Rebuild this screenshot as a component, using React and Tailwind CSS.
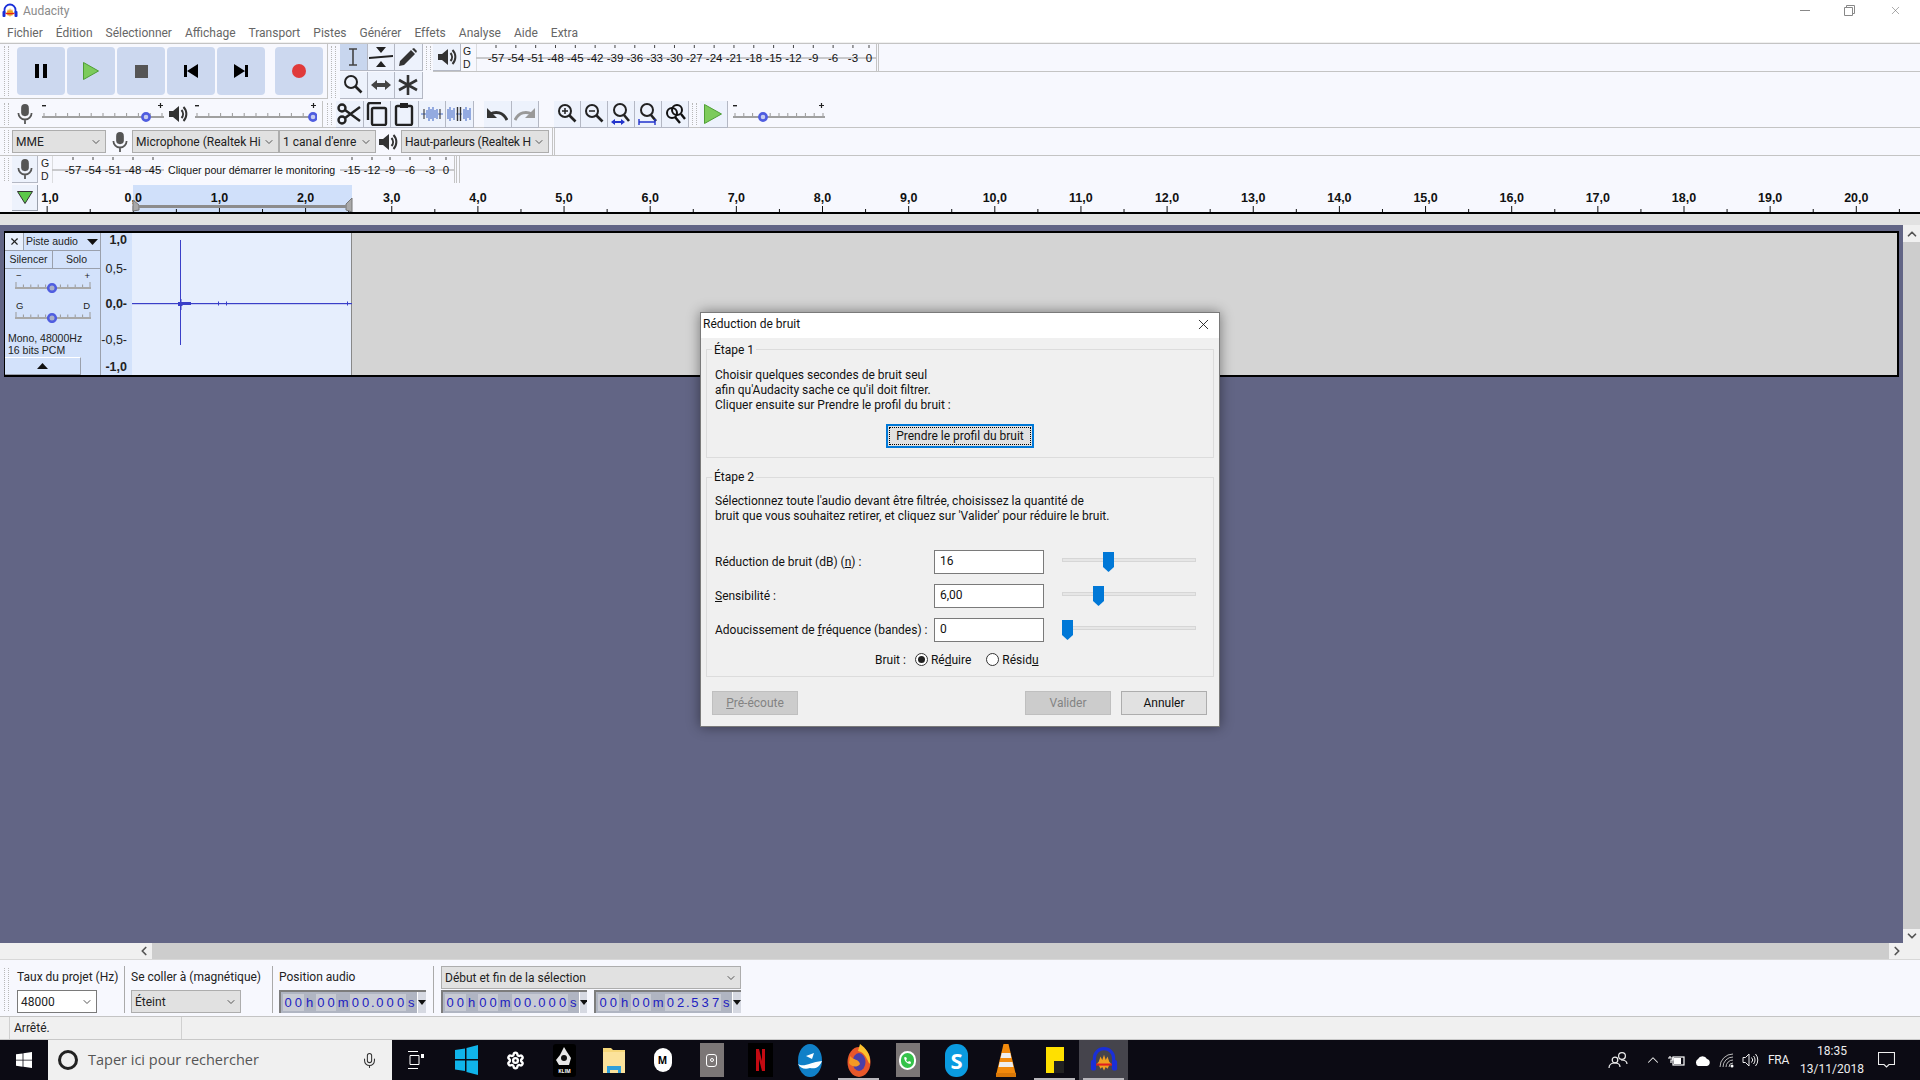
import { Fragment } from "react";
import { ChevronDown, ChevronLeft, ChevronRight, ChevronUp, Mic, Settings, X } from "lucide-react";

const menus = ["Fichier", "Édition", "Sélectionner", "Affichage", "Transport", "Pistes", "Générer", "Effets", "Analyse", "Aide", "Extra"];
const meterTop = ["-57", "-54", "-51", "-48", "-45", "-42", "-39", "-36", "-33", "-30", "-27", "-24", "-21", "-18", "-15", "-12", "-9", "-6", "-3", "0"];
const rulerMarks = Array.from({ length: 21 }, (_, i) => i);

function Grip({ className = "" }) {
  return (
    <div className={`w-[5px] shrink-0 self-stretch my-[2px] border-x border-dotted border-[#b8b8b8] ${className}`} />
  );
}

function ToolBtn({ children, active, narrow }) {
  return (
    <div
      className={`h-[27px] shrink-0 flex items-center justify-center border-r border-b border-[#b4b8c4] ${
        narrow ? "w-[27px]" : "w-[27.5px]"
      } ${active ? "bg-[#c8d6ee]" : "bg-[#edf2fc]"}`}
    >
      {children}
    </div>
  );
}

function Speaker({ size = 20, color = "#333" }) {
  return (
    <svg width={size} height={size} viewBox="0 0 20 20">
      <path d="M1 7h4l6-5v16l-6-5H1z" fill={color} />
      <path d="M13.5 6a6 6 0 0 1 0 8M15.5 3a10 10 0 0 1 0 14" stroke={color} strokeWidth="2" fill="none" />
    </svg>
  );
}

function MicIcon({ size = 20 }) {
  return (
    <svg width={size} height={size} viewBox="0 0 20 20">
      <rect x="6.5" y="1" width="7" height="11" rx="3.5" fill="#555" />
      <path d="M4 9a6 6 0 0 0 12 0M10 15v4" stroke="#555" strokeWidth="1.6" fill="none" />
    </svg>
  );
}

function Combo({ label, className = "", white }) {
  return (
    <div
      className={`flex items-center justify-between h-[23px] pl-[3px] pr-[3px] border shrink-0 overflow-hidden text-[12px] text-[#222] ${
        white ? "bg-white border-[#7a7a7a]" : "bg-[#e1e1e1] border-[#adadad]"
      } ${className}`}
    >
      <span className="whitespace-nowrap">{label}</span>
      <ChevronDown size={12} className="shrink-0 text-[#555]" />
    </div>
  );
}

function HSlider({ width, thumb }) {
  const ticks = Array.from({ length: 11 }, (_, i) => 2 + (i * (width - 4)) / 10);
  return (
    <svg width={width} height="24" viewBox={`0 0 ${width} 24`} className="shrink-0">
      <rect x="0" y="3" width="4" height="1.4" fill="#222" />
      <path d={`M${width - 6} 3.5h5M${width - 3.5} 1v5`} stroke="#222" strokeWidth="1.2" />
      {ticks.map((t) => (
        <line key={t} x1={t} x2={t} y1="11" y2="14" stroke="#999" />
      ))}
      <rect x="0" y="14" width={width} height="2" fill="#a0a0a0" />
      <circle cx={thumb} cy="15" r="3.6" fill="#c6ccee" stroke="#4f5de0" strokeWidth="2.6" />
    </svg>
  );
}

function Meter({ width, labels, message }) {
  return (
    <svg width={width} height="27" viewBox={`0 0 ${width} 27`} className="shrink-0">
      <line x1="0" x2={width} y1="14" y2="14" stroke="#9a9a9a" />
      <line x1="0" x2="0" y1="0" y2="27" stroke="#c0c0c0" />
      {labels.map((l) => (
        <Fragment key={l.t}>
          <line x1={l.x} x2={l.x} y1="1" y2="4" stroke="#444" />
          <text x={l.x} y="18" textAnchor="middle" fontFamily="'Liberation Sans', sans-serif" fontSize="11.5" fill="#111">
            {l.t}
          </text>
        </Fragment>
      ))}
      {message && (
        <>
          <rect x="112" y="6" width="176" height="17" fill="#f9fafe" />
          <text x="116" y="18" fontFamily="'Liberation Sans', sans-serif" fontSize="10.6" fill="#111">
            {message}
          </text>
        </>
      )}
    </svg>
  );
}

function GD() {
  return (
    <div className="w-[11px] shrink-0 flex flex-col justify-between py-[1px] font-['Liberation_Sans',sans-serif] text-[10.5px] leading-[13px] text-[#222]">
      <span>G</span>
      <span>D</span>
    </div>
  );
}

function TransportBtn({ children, className = "" }) {
  return (
    <div className={`w-[48px] h-[48px] rounded-[4px] bg-[#ccd8ef] flex items-center justify-center ${className}`}>{children}</div>
  );
}

function Row({ children, className = "" }) {
  return (
    <div className={`h-[28px] shrink-0 flex items-center bg-[#f7f8fe] border-b border-[#c4c4c4] ${className}`}>{children}</div>
  );
}

function MagGlass({ children }) {
  return (
    <svg width="24" height="24" viewBox="0 0 24 24">
      <circle cx="10" cy="9" r="6" fill="none" stroke="#222" strokeWidth="2" />
      <path d="M14.5 13.5l6 6" stroke="#222" strokeWidth="2.6" />
      {children}
    </svg>
  );
}

function Ruler() {
  const ticks = [];
  for (let i = -2; i <= 41; i++) ticks.push(i);
  const origin = 133.3;
  return (
    <svg width="1908" height="29" viewBox="0 0 1908 29" className="absolute left-0 top-0">
      {ticks.map((i) => {
        const x = origin + i * 43.075;
        return <line key={i} x1={x} x2={x} y1={i % 2 === 0 ? 23 : 26} y2="29" stroke="#111" />;
      })}
      {rulerMarks.map((m) => (
        <text
          key={m}
          x={origin + m * 86.15}
          y="19"
          textAnchor="middle"
          fontFamily="'Liberation Sans', sans-serif"
          fontSize="12.5"
          fontWeight="700"
          fill="#111"
        >
          {m},0
        </text>
      ))}
      <text x="50" y="19" textAnchor="middle" fontFamily="'Liberation Sans', sans-serif" fontSize="12.5" fontWeight="700" fill="#111">
        1,0
      </text>
      <path d="M133 17l6 5v5l-6 1zM352 15l-6 6v6l6 2z" fill="#a9a9a9" stroke="#777" />
      <rect x="139" y="22" width="207" height="3" fill="#8c8c8c" />
    </svg>
  );
}

function TrackSlider({ labels }) {
  const ticks = Array.from({ length: 11 }, (_, i) => 1 + i * 7.4);
  return (
    <div className="mx-[10px] w-[76px]">
      <div className="flex justify-between h-[11px] font-['Liberation_Sans',sans-serif] text-[9.5px] leading-[11px] text-[#222] px-[1px]">
        <span>{labels[0]}</span>
        <span>{labels[1]}</span>
      </div>
      <svg width="76" height="12" viewBox="0 0 76 12" className="block">
        {ticks.map((t, i) => (
          <line key={t} x1={t} x2={t} y1={i === 0 || i === 10 ? 1 : 3.5} y2="6" stroke="#999" />
        ))}
        <rect x="0" y="6" width="76" height="2" fill="#a8a8a8" />
        <circle cx="37" cy="7" r="3.8" fill="#aab0c8" stroke="#4f5de0" strokeWidth="2.6" />
      </svg>
    </div>
  );
}

function Wave() {
  return (
    <svg width="220" height="142" viewBox="0 0 220 142" className="block">
      <rect x="48" y="7" width="1" height="105" fill="#3a3fc8" />
      <rect x="0" y="70" width="220" height="1.2" fill="#3a3fc8" />
      <path d="M46 69h4l1 0h8v3h-8l-1 1h-4zM48 66h1.500v11H48z" fill="#3a3fc8" />
      <path d="M86 68.500h1v4h-1zM94 68.500h1v4h-1zM215 68.500h1v4h-1z" fill="#3a3fc8" />
    </svg>
  );
}

const timeCellWidth = { h: "w-[12px]", m: "w-[14px]", s: "w-[11px]", ".": "w-[4px]" };

function TimeBox({ value, className = "" }) {
  return (
    <div className={`flex items-center h-[23px] bg-[#b0b5c2] border-t-2 border-l-2 border-[#7d7d7d] font-['Liberation_Sans',sans-serif] text-[13px] text-[#2020c0] shrink-0 overflow-hidden ${className}`}>
      <div className="w-[2px] shrink-0" />
      {value.split("").map((c, i) => (
        <span
          key={i}
          className={`h-[17px] shrink-0 flex items-center justify-center leading-none ${timeCellWidth[c] ?? "w-[10.3px]"} ${
            /[0-9.]/.test(c) ? "bg-[#c8cbd4]" : ""
          }`}
        >
          {c}
        </span>
      ))}
      <span className="ml-auto w-[10px] h-[21px] shrink-0 bg-[#d6d9e2] border-l border-white flex items-center justify-center">
        <svg width="8" height="5" viewBox="0 0 8 5"><path d="M0 0h8L4 5z" fill="#111" /></svg>
      </span>
    </div>
  );
}

function TextInput({ value }) {
  return (
    <div className="w-[110px] h-[24px] bg-white border border-[#7a7a7a] pl-[5px] pb-[2px] flex items-center shrink-0">{value}</div>
  );
}

function BlueSlider({ pos }) {
  return (
    <div className="relative w-[134px] h-[24px] ml-[18px] shrink-0">
      <div className="absolute left-0 right-0 top-[8px] h-[4px] bg-[#e6e6e6] border border-[#d6d6d6]" />
      <svg width="11" height="20" viewBox="0 0 11 20" className="absolute top-[2px]" style={{ left: pos }}>
        <path d="M0 0h11v15l-5.5 5L0 15z" fill="#0078d7" />
      </svg>
    </div>
  );
}

function DlgRow({ label, value, pos }) {
  return (
    <div className="flex items-center h-[24px]">
      <div className="w-[219px] shrink-0 whitespace-nowrap">{label}</div>
      <TextInput value={value} />
      <BlueSlider pos={pos} />
    </div>
  );
}

function DlgButton({ children, disabled, className = "" }) {
  return (
    <div
      className={`w-[86px] h-[24px] flex items-center justify-center border ${
        disabled ? "bg-[#cccccc] border-[#bfbfbf] text-[#838383]" : "bg-[#e1e1e1] border-[#adadad] text-[#111]"
      } ${className}`}
    >
      {children}
    </div>
  );
}

function AudacityIcon({ size = 16 }) {
  return (
    <svg width={size} height={size} viewBox="0 0 16 16">
      <path d="M2.5 10V7a5.5 5.5 0 0 1 11 0v3" fill="none" stroke="#1a2fd8" strokeWidth="1.8" />
      <rect x="0.5" y="8" width="3" height="6" rx="1" fill="#1a2fd8" />
      <rect x="12.5" y="8" width="3" height="6" rx="1" fill="#1a2fd8" />
      <path d="M4 10l1-1 1-3 1 2 1-3 1 3 1-2 1 3 1 1-1 1-1 2-1-1-1 2-1-2-1 1-1-2z" fill="#f0a020" />
      <rect x="3.5" y="10" width="9" height="1.2" fill="#e02020" />
    </svg>
  );
}

function TaskIcon({ children, className = "", line }) {
  return (
    <div className={`w-[49px] h-[40px] shrink-0 flex items-center justify-center relative ${className}`}>
      {children}
      {line && <div className="absolute bottom-0 left-[4px] right-[4px] h-[2px] bg-[#b8b6bb]" />}
    </div>
  );
}

function Taskbar() {
  return (
    <div className="h-[40px] shrink-0 bg-[#0c0b14] flex items-center text-white font-['Open_Sans',sans-serif]">
      <div className="w-[48px] flex items-center justify-center shrink-0">
        <svg width="16" height="16" viewBox="0 0 16 16">
          <path d="M0 2.3l6.6-.9v6.3H0zM7.4 1.3L16 0v7.7H7.4zM0 8.4h6.6v6.3L0 13.700zM7.4 8.400H16V16l-8.600-1.200z" fill="#fff" />
        </svg>
      </div>
      <div className="w-[344px] h-[40px] bg-[#f0f0f0] flex items-center shrink-0 pl-[10px] pr-[14px] text-[#555] text-[14.5px]">
        <div className="w-[20px] h-[20px] rounded-full border-[3px] border-[#222] shrink-0" />
        <span className="ml-[10px] flex-1">Taper ici pour rechercher</span>
        <Mic size={17} strokeWidth={1.5} className="text-[#333]" />
      </div>
      <div className="w-[16px] shrink-0" />
      <svg width="16" height="20" viewBox="0 0 16 20" fill="none" stroke="#fff" strokeWidth="1" className="shrink-0">
        <path d="M0 1.5h10M0 18.5h10M2 5.5h9v9H2z" />
        <rect x="13" y="4" width="3" height="4" fill="#fff" stroke="none" />
      </svg>
      <div className="w-[18px] shrink-0" />
      <TaskIcon>
        <svg width="23" height="30" viewBox="0 0 23 30">
          <path d="M0 5l10-1.500v10.500H0zM11.500 3L23 0v14H11.500zM0 15.500h10v10.500L0 24.500zM11.500 15.500H23V30l-11.500-3z" fill="#10b4ea" />
        </svg>
      </TaskIcon>
      <TaskIcon>
        <Settings size={19} strokeWidth={3} color="#fff" />
      </TaskIcon>
      <TaskIcon>
        <div className="w-[23px] h-[33px] bg-black rounded-[3px] flex flex-col items-center justify-center">
          <svg width="17" height="21" viewBox="0 0 17 21">
            <path d="M8 0l3 5 4 6-2 7H3l-3-5 4-5z" fill="#e8e8e8" />
            <circle cx="8" cy="11" r="3" fill="#111" />
          </svg>
          <span className="text-[5px] leading-[6px] font-bold">KLIM</span>
        </div>
      </TaskIcon>
      <TaskIcon>
        <svg width="22" height="26" viewBox="0 0 22 26">
          <path d="M0 1h8l2 2h12v23H0z" fill="#f6d77a" />
          <rect x="0" y="5" width="22" height="21" fill="#fbe29b" />
          <path d="M4 19h14v7h-3v-3H7v3H4z" fill="#2e9fdb" />
        </svg>
      </TaskIcon>
      <TaskIcon>
        <div className="w-[18px] h-[24px] rounded-full bg-white flex items-center justify-center text-black text-[10px] font-bold">M</div>
      </TaskIcon>
      <TaskIcon>
        <div className="w-[24px] h-[34px] bg-[#7b7676] flex items-center justify-center">
          <div className="w-[11px] h-[13px] border-[1.5px] border-white rounded-[3px] flex items-center justify-center">
            <div className="w-[4px] h-[4px] border border-white rounded-full" />
          </div>
        </div>
      </TaskIcon>
      <TaskIcon>
        <div className="w-[25px] h-[34px] bg-black flex items-center justify-center">
          <svg width="9" height="22" viewBox="0 0 9 22">
            <path d="M0 0h3l3 12V0h3v22H6L3 10v12H0z" fill="#c30a12" />
          </svg>
        </div>
      </TaskIcon>
      <TaskIcon>
        <svg width="24" height="33" viewBox="0 0 24 33">
          <ellipse cx="12" cy="16.500" rx="12" ry="16.500" fill="#1080c8" />
          <path d="M0 20c6 4 12-2 24-3-3 7-7 8-12 7-5 2-10 0-12-4zM8 12l8-3-2 6-2-1z" fill="#fff" />
        </svg>
      </TaskIcon>
      <TaskIcon line>
        <svg width="24" height="33" viewBox="0 0 24 33">
          <ellipse cx="12" cy="18" rx="11.500" ry="15" fill="#e8572a" />
          <ellipse cx="12" cy="18" rx="6.500" ry="9" fill="#4a3fa8" />
          <path d="M13 0c6 4 11 11 10 19-1 3-3-8-9-11l-3-1z" fill="#fbc02d" />
          <path d="M3 12c3 4 9 3 10 8-3 4-9 3-11-1z" fill="#f59a23" />
        </svg>
      </TaskIcon>
      <TaskIcon>
        <div className="w-[24px] h-[34px] bg-[#7b7676] flex items-center justify-center">
          <div className="w-[17px] h-[19px] rounded-full bg-[#35c24a] border-2 border-white flex items-center justify-center">
            <svg width="9" height="9" viewBox="0 0 9 9"><path d="M1 1.500L3 1l1 2-1 1q1 2 2 2l1-1 2 1-.5 2Q2 8 1 1.500z" fill="#fff" /></svg>
          </div>
        </div>
      </TaskIcon>
      <TaskIcon>
        <div className="w-[23px] h-[33px] rounded-[11px] bg-[#0a9be0] flex items-center justify-center text-white font-bold text-[22px] leading-none">S</div>
      </TaskIcon>
      <TaskIcon>
        <svg width="20" height="33" viewBox="0 0 20 33">
          <path d="M7.500 0h5l7 29H.5z" fill="#f28a0c" />
          <path d="M5.700 9h8.600l1 5H4.600zM3.600 18h12.800l1 5H2.600z" fill="#eee" />
          <rect x="0" y="29" width="20" height="4" fill="#d97808" />
        </svg>
      </TaskIcon>
      <TaskIcon line>
        <div className="w-[18px] h-[26px] bg-[#ffe000] relative">
          <div className="absolute right-0 bottom-0 w-[10px] h-[12px] bg-[#222]" />
        </div>
      </TaskIcon>
      <TaskIcon className="bg-[#45444c]" line>
        <AudacityIcon size={28} />
      </TaskIcon>
      <div className="flex-1" />
      {/* tray */}
      <div className="flex items-center shrink-0 h-[40px] pr-[25px] text-[12px] text-[#eee]">
        <svg width="22" height="18" viewBox="0 0 22 18" fill="none" stroke="#eee" strokeWidth="1.2" className="shrink-0">
          <circle cx="14" cy="5" r="3.400" />
          <circle cx="7" cy="9" r="2.800" />
          <path d="M1 17c0-4 3-5 6-5 3 0 5 1 5 4M13 9c3 0 6 1 6 4" />
        </svg>
        <ChevronUp size={18} strokeWidth={1.4} className="shrink-0 ml-[14px]" />
        <svg width="18" height="13" viewBox="0 0 18 13" fill="none" stroke="#fff" strokeWidth="1.2" className="shrink-0 ml-[5px]">
          <rect x="6" y="3" width="11" height="8" />
          <rect x="7" y="4" width="7" height="6" fill="#fff" stroke="none" />
          <path d="M3 2v2M1 4h5v2H4v3" />
        </svg>
        <svg width="17" height="11" viewBox="0 0 17 11" className="shrink-0 ml-[9px]">
          <path d="M4 11a4 4 0 0 1 0-7 5 5 0 0 1 9 0 3.600 3.600 0 0 1 0 7z" fill="#fff" />
        </svg>
        <svg width="15" height="15" viewBox="0 0 15 15" fill="none" stroke="#bbb" strokeWidth="1" className="shrink-0 ml-[8px]">
          <path d="M1 14A13 13 0 0 1 14 1M4 14A10 10 0 0 1 14 4M7 14a7 7 0 0 1 7-7M10 14a4 4 0 0 1 4-4" />
          <circle cx="13" cy="13" r="1.500" fill="#fff" stroke="none" />
        </svg>
        <svg width="17" height="14" viewBox="0 0 17 14" fill="none" stroke="#eee" strokeWidth="1" className="shrink-0 ml-[8px]">
          <path d="M1 4.500h2.500L7 1v12L3.500 9.500H1zM9.500 4.500a3.500 3.500 0 0 1 0 5M11.500 3a6 6 0 0 1 0 8M13.500 1a9 9 0 0 1 0 12" />
        </svg>
        <span className="ml-[9px] w-[26px] leading-[16px] font-['Roboto',sans-serif] tracking-tight">FRA</span>
        <div className="ml-[3px] w-[70px] text-center text-[12px] leading-[18px] font-['Roboto',sans-serif]">
          <div>18:35</div>
          <div>13/11/2018</div>
        </div>
        <svg width="17" height="16" viewBox="0 0 17 16" fill="none" stroke="#eee" strokeWidth="1.100" className="shrink-0 ml-[11px]">
          <path d="M.5.500h16v12H11l-2.500 2.500L6 12.500H.5z" />
        </svg>
      </div>
    </div>
  );
}

export default function App() {
  return (
    <div className="relative w-[1920px] h-[1080px] overflow-hidden flex flex-col bg-[#f0f0f0] font-['Roboto',sans-serif] text-[12px] text-[#222]">
      {/* window title */}
      <div className="h-[24px] shrink-0 bg-white flex items-center pl-[2px] pb-[3px]">
        <AudacityIcon />
        <span className="ml-[5px] text-[#8a8a8a] text-[12px]">Audacity</span>
        <div className="ml-auto flex items-center text-[#777] pr-[1px]">
          <div className="w-[45px] flex justify-center"><div className="w-[10px] h-px bg-[#888]" /></div>
          <div className="w-[45px] flex justify-center">
            <svg width="11" height="11" viewBox="0 0 11 11" fill="none" stroke="#888"><path d="M.5 2.500h8v8h-8zM2.500 2.500v-2h8v8h-2" /></svg>
          </div>
          <div className="w-[47px] pl-[17px] flex">
            <X size={13} strokeWidth={1} className="text-[#666]" />
          </div>
        </div>
      </div>
      {/* menu */}
      <div className="h-[18px] shrink-0 bg-white flex items-center gap-[13px] pl-[7px] text-[#666] text-[12px]">
        {menus.map((m) => (
          <span key={m}>{m}</span>
        ))}
      </div>
      <div className="h-px shrink-0 bg-[#f0f0f0]" />

      {/* toolbars */}
      <div className="border-t border-[#c4c4c4] shrink-0 flex flex-col h-[140px] bg-[#f7f8fe]">
        <div className="flex h-[56px] shrink-0">
          <div className="w-[328px] shrink-0 flex items-center pl-[4px] border-b border-r border-[#c4c4c4] h-[55px]">
            <Grip className="mr-[8px]" />
            <div className="flex gap-[2px]">
              <TransportBtn>
                <svg width="14" height="16" viewBox="0 0 14 16"><path d="M1 1h4v14H1zM9 1h4v14H9z" fill="#000" /></svg>
              </TransportBtn>
              <TransportBtn>
                <svg width="16" height="18" viewBox="0 0 16 18"><path d="M.5.500l15 8.500-15 8.500z" fill="#7ccb5b" stroke="#4e9e35" /></svg>
              </TransportBtn>
              <TransportBtn>
                <div className="w-[13px] h-[13px] bg-[#555]" />
              </TransportBtn>
              <TransportBtn>
                <svg width="14" height="14" viewBox="0 0 14 14"><path d="M0 1h3v12H0zM14 0v14L3 7z" fill="#000" /></svg>
              </TransportBtn>
              <TransportBtn>
                <svg width="14" height="14" viewBox="0 0 14 14"><path d="M11 1h3v12h-3zM0 0v14l11-7z" fill="#000" /></svg>
              </TransportBtn>
              <TransportBtn className="ml-[8px]">
                <div className="w-[14px] h-[14px] rounded-full bg-[#e03a3a]" />
              </TransportBtn>
            </div>
          </div>
          <Grip className="mx-[3px]" />
          <div className="flex flex-col w-[84px] shrink-0 ml-[1px]">
            <div className="flex">
              <ToolBtn active>
                <svg width="12" height="18" viewBox="0 0 12 18" fill="none" stroke="#444" strokeWidth="1.6"><path d="M2 1h8M2 17h8M6 1v16" /></svg>
              </ToolBtn>
              <ToolBtn>
                <svg width="26" height="22" viewBox="0 0 26 22"><path d="M8 1h10l-5 6zM8 21h10l-5-6zM1 11l24-2v2L1 13z" fill="#222" /></svg>
              </ToolBtn>
              <ToolBtn>
                <svg width="20" height="20" viewBox="0 0 20 20"><path d="M1 19l1-5L13 3l4 4L6 18zM14 2l2-1 3 3-1 2z" fill="#333" /></svg>
              </ToolBtn>
            </div>
            <div className="flex mt-[1px]">
              <ToolBtn>
                <MagGlass />
              </ToolBtn>
              <ToolBtn>
                <svg width="20" height="12" viewBox="0 0 20 12"><path d="M0 6l6-5v3h8V1l6 5-6 5V8H6v3z" fill="#444" /></svg>
              </ToolBtn>
              <ToolBtn>
                <svg width="20" height="20" viewBox="0 0 20 20" stroke="#333" strokeWidth="2.6"><path d="M10 0v20M1 5l18 10M1 15L19 5" /></svg>
              </ToolBtn>
            </div>
          </div>
          <Grip className="mx-[2px] h-[24px] self-start" />
          <div className="flex-1 h-[28px] flex items-center border-b border-[#c4c4c4]">
            <div className="w-[28px] h-[27px] bg-[#edf2fc] border-r border-b border-[#b4b8c4] flex items-center justify-center shrink-0">
              <Speaker />
            </div>
            <div className="ml-[2px] mr-[2px] h-[27px] flex">
              <GD />
            </div>
            <Meter width={400} labels={meterTop.map((t, i) => ({ t, x: i === 19 ? 393 : 20 + i * 19.83 }))} />
            <div className="w-[3px] h-[27px] border-x border-[#c4c4c4]" />
          </div>
        </div>

        <Row className="pl-[4px] pt-[1px]">
          <Grip />
          <div className="w-[5px]" />
          <MicIcon size={22} />
          <div className="w-[6px]" />
          <HSlider width={122} thumb={104} />
          <div className="w-[4px]" />
          <Speaker size={20} />
          <div className="w-[7px]" />
          <HSlider width={122} thumb={118} />
          <div className="w-[5px]" />
          <div className="w-px h-[27px] bg-[#c4c4c4]" />
          <Grip className="ml-[4px] mr-[4px]" />
          <ToolBtn>
            <svg width="24" height="22" viewBox="0 0 24 22" fill="none" stroke="#222" strokeWidth="2.4"><circle cx="5" cy="5" r="3.500" /><circle cx="5" cy="17" r="3.500" /><path d="M8 7l15 11M8 15L23 4" /></svg>
          </ToolBtn>
          <ToolBtn>
            <svg width="22" height="24" viewBox="0 0 22 24" fill="none" stroke="#222" strokeWidth="2.4"><rect x="6" y="6" width="14" height="17" rx="1.500" /><path d="M2 18V3q0-2 2-2h11" /></svg>
          </ToolBtn>
          <ToolBtn>
            <svg width="20" height="24" viewBox="0 0 20 24" fill="none" stroke="#222" strokeWidth="2.4"><rect x="2" y="4" width="16" height="19" rx="1.500" /><rect x="6" y="1" width="8" height="5" fill="#222" stroke="none" /></svg>
          </ToolBtn>
          <ToolBtn>
            <svg width="22" height="16" viewBox="0 0 22 16" stroke="#4a6fc8" strokeWidth="1.100"><path d="M0 8h5M17 8h5M6 4v8M8 1v14M10 3v10M12 1v14M14 4v8M16 3v10" /><path d="M3 3v10M19 3v10" stroke="#333" /></svg>
          </ToolBtn>
          <ToolBtn>
            <svg width="24" height="16" viewBox="0 0 24 16" fill="none" stroke="#4a6fc8" strokeWidth="1.100"><path d="M1 3v10M3 1v14M5 4v8M7 2v12M9 8h6M17 3v10M19 1v14M21 4v8M23 2v12" /><path d="M10.500 1v14M13.500 1v14" stroke="#333" strokeWidth="1.400" /></svg>
          </ToolBtn>
          <div className="w-[10.500px]" />
          <ToolBtn>
            <svg width="22" height="14" viewBox="0 0 22 14" fill="none" stroke="#333" strokeWidth="3"><path d="M21 13C17 5 10 4 4 7" /><path d="M1 1v10h10z" fill="#333" stroke="none" /></svg>
          </ToolBtn>
          <ToolBtn>
            <svg width="22" height="14" viewBox="0 0 22 14" fill="none" stroke="#999" strokeWidth="3"><path d="M1 13C5 5 12 4 18 7" /><path d="M21 1v10H11z" fill="#999" stroke="none" /></svg>
          </ToolBtn>
          <div className="w-[15px]" />
          <ToolBtn narrow>
            <MagGlass><path d="M7 9h6M10 6v6" stroke="#222" strokeWidth="1.500" /></MagGlass>
          </ToolBtn>
          <ToolBtn narrow>
            <MagGlass><path d="M7 9h6" stroke="#222" strokeWidth="1.500" /></MagGlass>
          </ToolBtn>
          <ToolBtn narrow>
            <svg width="24" height="24" viewBox="0 0 24 24"><circle cx="11" cy="8" r="6" fill="none" stroke="#222" strokeWidth="2" /><path d="M15 13l5 6" stroke="#222" strokeWidth="2.600" /><path d="M2 20l4-3v2h6v-2l4 3-4 3v-2H6v2z" fill="#2233cc" /></svg>
          </ToolBtn>
          <ToolBtn narrow>
            <svg width="24" height="24" viewBox="0 0 24 24"><circle cx="11" cy="8" r="6" fill="none" stroke="#222" strokeWidth="2" /><path d="M15 13l5 6" stroke="#222" strokeWidth="2.600" /><path d="M3 17v6M19 17v6M3 20h16" stroke="#2233cc" strokeWidth="1.400" /></svg>
          </ToolBtn>
          <ToolBtn narrow>
            <svg width="24" height="24" viewBox="0 0 24 24" fill="none" stroke="#111" strokeWidth="2"><circle cx="9" cy="11" r="5" /><circle cx="14" cy="8" r="5" /><path d="M12 15l5 6M18 12l4 5" strokeWidth="2.400" /></svg>
          </ToolBtn>
          <Grip className="ml-[3px] mr-[3px]" />
          <ToolBtn>
            <svg width="18" height="20" viewBox="0 0 18 20"><path d="M.5.500l17 9.500-17 9.500z" fill="#7ccb5b" stroke="#4e9e35" /></svg>
          </ToolBtn>
          <div className="w-[5px]" />
          <HSlider width={92} thumb={30} />
        </Row>

        <Row className="pl-[4px]">
          <Grip />
          <div className="w-[3px]" />
          <Combo label="MME" className="w-[94px]" />
          <div className="w-[3px]" />
          <MicIcon size={22} />
          <div className="w-[1px]" />
          <Combo label="Microphone (Realtek Hi" className="w-[147px]" />
          <Combo label="1 canal d'enre" className="w-[97px]" />
          <div className="w-[2px]" />
          <Speaker size={20} />
          <div className="w-[3px]" />
          <Combo label={<span className="tracking-[-0.2px]">Haut-parleurs (Realtek H</span>} className="w-[148px]" />
          <div className="ml-[3px] w-[3px] h-[27px] border-x border-[#c4c4c4]" />
        </Row>

        <Row className="pl-[4px]">
          <Grip />
          <div className="w-[3px]" />
          <div className="w-[26px] h-[27px] bg-[#edf2fc] border-r border-b border-[#b4b8c4] flex items-center justify-center shrink-0">
            <MicIcon size={22} />
          </div>
          <div className="w-[3px]" />
          <GD />
          <Meter
            width={402}
            message="Cliquer pour démarrer le monitoring"
            labels={[
              { t: "-57", x: 21 },
              { t: "-54", x: 41 },
              { t: "-51", x: 61 },
              { t: "-48", x: 81 },
              { t: "-45", x: 101 },
              { t: "-15", x: 300 },
              { t: "-12", x: 320 },
              { t: "-9", x: 338 },
              { t: "-6", x: 358 },
              { t: "-3", x: 378 },
              { t: "0", x: 394 },
            ]}
          />
          <div className="w-[3px] h-[27px] border-x border-[#c4c4c4]" />
          <div className="w-[3px] h-[27px] border-r border-[#c4c4c4]" />
        </Row>
      </div>

      {/* ruler */}
      <div className="relative h-[31px] shrink-0 bg-[#f7f8fe] border-b-2 border-black pl-[12px] pt-[2px]">
        <div className="absolute left-[133px] top-[2px] bottom-0 w-[219px] bg-[#d0e0fa]" />
        <Ruler />
        <div className="relative w-[26px] h-[26px] bg-[#edf2fc] border-r border-b border-[#9aa0ac] flex items-center justify-center">
          <svg width="16" height="13" viewBox="0 0 16 13"><path d="M.5.500h15L8 12.500z" fill="#5cc84a" stroke="#333" /></svg>
        </div>
      </div>
      <div className="h-[11px] shrink-0 bg-[#e2e2e2]" />

      {/* tracks area */}
      <div className="flex-1 min-h-0 flex bg-[#626585]">
        <div className="flex-1 min-w-0 pl-[4px] pr-[4px] pt-[6px]">
          <div className="h-[146px] flex bg-[#d4d4d4] border-y-2 border-l border-r-2 border-black">
            <div className="w-[96px] shrink-0 bg-[#d3e2fb] flex flex-col border-r border-[#9aa0ac] font-['Liberation_Sans',sans-serif] text-[10.5px]">
              <div className="flex h-[18px] border-b border-[#9aa0ac] shrink-0">
                <div className="w-[19px] flex items-center justify-center border-r border-[#9aa0ac] bg-[#e8effc]">
                  <X size={11} strokeWidth={2.5} />
                </div>
                <div className="flex-1 flex items-center justify-between pl-[2px] pr-[2px]">
                  <span>Piste audio</span>
                  <svg width="11" height="6" viewBox="0 0 11 6"><path d="M0 0h11L5.500 6z" fill="#111" /></svg>
                </div>
              </div>
              <div className="flex h-[18px] border-b border-[#9aa0ac] shrink-0">
                <div className="flex-1 flex items-center justify-center border-r border-[#9aa0ac]">Silencer</div>
                <div className="w-[47px] flex items-center justify-center">Solo</div>
              </div>
              <div className="mt-[1px]"><TrackSlider labels={["−", "+"]} /></div>
              <div className="mt-[7px]"><TrackSlider labels={["G", "D"]} /></div>
              <div className="mt-[9px] pl-[3px] leading-[12px] text-[10.5px]">
                <div>Mono, 48000Hz</div>
                <div>16 bits PCM</div>
              </div>
              <div className="mt-auto w-[76px] h-[18px] bg-[#d3e2fb] border-r border-b border-t border-t-white border-[#9aa0ac] flex items-center justify-center">
                <svg width="11" height="6" viewBox="0 0 11 6"><path d="M0 6h11L5.500 0z" fill="#111" /></svg>
              </div>
            </div>
            <div className="w-[31px] shrink-0 bg-[#d3e2fb] flex flex-col items-end pr-[5px] font-['Liberation_Sans',sans-serif] text-[12.5px] leading-[14px]">
              <span className="font-bold">1,0</span>
              <span className="mt-[15px]">0,5-</span>
              <span className="mt-[21px] font-bold">0,0-</span>
              <span className="mt-[22px]">-0,5-</span>
              <span className="mt-[13px] font-bold">-1,0</span>
            </div>
            <div className="w-[220px] shrink-0 bg-[#e6eefd] border-r border-[#888]">
              <Wave />
            </div>
          </div>
        </div>
        <div className="w-[17px] shrink-0 bg-[#f0f0f0] flex flex-col items-center">
          <ChevronUp size={14} strokeWidth={3} className="mt-[2px] text-[#555]" />
          <div className="w-full flex-1 bg-[#cdcdcd] mt-[1px]" />
          <ChevronDown size={14} strokeWidth={3} className="text-[#555]" />
        </div>
      </div>

      {/* horizontal scroll */}
      <div className="h-[16px] shrink-0 bg-[#f0f0f0] flex items-center pl-[137px]">
        <ChevronLeft size={14} strokeWidth={3} className="text-[#555] mr-[1px]" />
        <div className="flex-1 h-full bg-[#cdcdcd]" />
        <ChevronRight size={14} strokeWidth={3} className="text-[#555] ml-[1px] mr-[16px]" />
      </div>
      <div className="h-px shrink-0 bg-[#d8d8d8]" />

      {/* selection toolbar */}
      <div className="h-[57px] shrink-0 bg-[#f7f8fe] border-b border-[#c4c4c4] flex pl-[4px] pt-[6px] pb-[3px]">
        <Grip className="mr-[8px]" />
        <div className="w-[108px] shrink-0 flex flex-col justify-between border-r border-[#aaa]">
          <div className="h-[22px] flex items-center whitespace-nowrap">Taux du projet (Hz)</div>
          <Combo label="48000" white className="w-[80px]" />
        </div>
        <div className="w-[148px] shrink-0 pl-[6px] flex flex-col justify-between border-r border-[#aaa]">
          <div className="h-[22px] flex items-center whitespace-nowrap">Se coller à (magnétique)</div>
          <Combo label="Éteint" className="w-[110px]" />
        </div>
        <div className="w-[161px] shrink-0 pl-[6px] flex flex-col justify-between border-r border-[#aaa]">
          <div className="h-[22px] flex items-center">Position audio</div>
          <TimeBox value="00h00m00.000s" className="w-[147px]" />
        </div>
        <div className="w-[300px] shrink-0 pl-[7px] flex flex-col justify-between">
          <Combo label="Début et fin de la sélection" className="w-[300px]" />
          <div className="flex gap-[7px] w-[300px]">
            <TimeBox value="00h00m00.000s" className="w-[146px]" />
            <TimeBox value="00h00m02.537s" className="w-[147px]" />
          </div>
        </div>
      </div>

      {/* status */}
      <div className="h-[23px] shrink-0 bg-[#f0f0f0] flex items-center border-b border-[#c8c8c8]">
        <div className="ml-[9px] w-[173px] h-full border-x border-[#d0d0d0] pl-[4px] flex items-center">Arrêté.</div>
      </div>

      <Taskbar />

      {/* noise reduction dialog */}
      <div className="absolute left-[700px] top-[312px] w-[520px] h-[415px] bg-[#f0f0f0] border border-[#7a7a7a] shadow-[0_0_12px_rgba(0,0,0,0.45)] flex flex-col text-[#111]">
        <div className="h-[25px] bg-white flex items-center justify-between pl-[2px] pr-[7px] pb-[3px] shrink-0">
          <span>Réduction de bruit</span>
          <X size={17} strokeWidth={1.2} />
        </div>
        <div className="relative mx-[5px] mt-[11px] h-[109px] border border-[#dcdcdc] shrink-0 px-[8px] pt-[18px]">
          <span className="absolute left-[5px] -top-[9px] px-[2px] bg-[#f0f0f0]">Étape 1</span>
          <div className="leading-[15px]">
            <div>Choisir quelques secondes de bruit seul</div>
            <div>afin qu'Audacity sache ce qu'il doit filtrer.</div>
            <div>Cliquer ensuite sur Prendre le profil du bruit :</div>
          </div>
          <div className="mt-[11px] mx-auto w-[148px] h-[24px] bg-[#e1e1e1] border-2 border-[#0078d7] flex items-center justify-center outline-1 outline-dotted outline-offset-[-4px] outline-black">
            Prendre le profil du bruit
          </div>
        </div>
        <div className="relative mx-[5px] mt-[19px] h-[200px] border border-[#dcdcdc] shrink-0 px-[8px] pt-[16px]">
          <span className="absolute left-[5px] -top-[10px] px-[2px] bg-[#f0f0f0]">Étape 2</span>
          <div className="leading-[15px]">
            <div>Sélectionnez toute l'audio devant être filtrée, choisissez la quantité de</div>
            <div>bruit que vous souhaitez retirer, et cliquez sur 'Valider' pour réduire le bruit.</div>
          </div>
          <div className="mt-[26px] flex flex-col gap-[10px]">
            <DlgRow label={<>Réduction de bruit (dB) (<u>n</u>) :</>} value="16" pos={41} />
            <DlgRow label={<><u>S</u>ensibilité :</>} value="6,00" pos={31} />
            <DlgRow label={<>Adoucissement de <u>f</u>réquence (bandes) :</>} value="0" pos={0} />
          </div>
          <div className="mt-[9px] flex items-center h-[17px] pl-[160px]">
            <span>Bruit :</span>
            <div className="ml-[9px] w-[13px] h-[13px] rounded-full border border-[#333] bg-white flex items-center justify-center">
              <div className="w-[7px] h-[7px] rounded-full bg-[#222]" />
            </div>
            <span className="ml-[3px]">Ré<u>d</u>uire</span>
            <div className="ml-[15px] w-[13px] h-[13px] rounded-full border border-[#333] bg-white" />
            <span className="ml-[3px]">Résid<u>u</u></span>
          </div>
        </div>
        <div className="mt-[14px] pl-[11px] pr-[12px] flex shrink-0">
          <DlgButton disabled><span><u>P</u>ré-écoute</span></DlgButton>
          <DlgButton disabled className="ml-auto">Valider</DlgButton>
          <DlgButton className="ml-[10px]">Annuler</DlgButton>
        </div>
      </div>
    </div>
  );
}
